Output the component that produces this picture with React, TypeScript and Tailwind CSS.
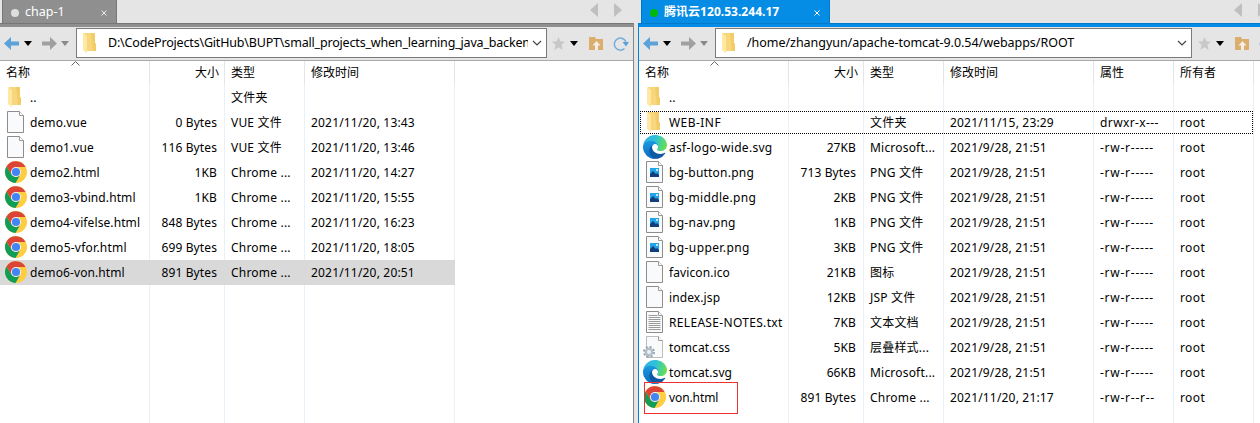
import { useId } from "react";
import type { ReactNode } from "react";

type IconKind = "folder" | "blank" | "chrome" | "edge" | "image" | "text" | "css";
type Entry = { icon: IconKind; name: string; size?: string; type?: string; time?: string; attr?: string; owner?: string; state?: "selected" | "focused" | "marked"; spacing?: string };

function Folder() {
  return (
    <svg width="16" height="22" viewBox="0 0 16 22" className="block">
      <path d="M2 1h11v10.500h1V19H4z" fill="#f7d67c" />
      <path d="M9 1h4v10.500h1V19h-3z" fill="#f1cc67" />
      <path d="M1 1l4 3v17.500L1 18z" fill="#ffe8a3" />
    </svg>
  );
}

function Page({ children }: { children?: ReactNode }) {
  return (
    <svg width="17" height="22" viewBox="0 0 17 22" className="block">
      <path d="M.5.5h12l4 4v17H.5z" fill="#f9fafb" stroke="#8d8d8d" />
      <path d="M12.500.5v4h4" fill="#fff" stroke="#9a9a9a" />
      {children}
    </svg>
  );
}

function Chrome() {
  return (
    <svg width="22" height="22" viewBox="0 0 48 48" className="block">
      <circle cx="24" cy="24" r="24" fill="#ffcd40" />
      <path d="M3.200 12L14.500 29.500A11 11 0 0 0 33.500 29.500L23 48A24 24 0 0 1 3.200 12z" fill="#0f9d58" />
      <path d="M3.200 12L14.500 29.500 24 13h20.800A24 24 0 0 0 3.200 12z" fill="#db4437" />
      <circle cx="24" cy="24" r="11" fill="#f1f1f1" />
      <circle cx="24" cy="24" r="8.900" fill="#4285f4" />
    </svg>
  );
}

function Edge() {
  const id = useId();
  return (
    <svg width="24" height="24" viewBox="0 0 256 256" className="block">
      <defs>
        <linearGradient id={id + "a"} x1="0" y1="0.300" x2="1" y2="0.500">
          <stop offset="0" stopColor="#35aee8" />
          <stop offset="0.500" stopColor="#2fc3d8" />
          <stop offset="1" stopColor="#66e04c" />
        </linearGradient>
        <linearGradient id={id + "b"} x1="0" y1="0" x2="0" y2="1">
          <stop offset="0" stopColor="#1b9de2" />
          <stop offset="1" stopColor="#0a6bc0" />
        </linearGradient>
      </defs>
      <path d="M231.100 190.500c-3.400 1.800-6.900 3.400-10.500 4.700a101.600 101.600 0 0 1-35.900 6.500c-47.300 0-88.500-32.500-88.500-74.300a31.500 31.500 0 0 1 16.400-27.300c-42.800 1.800-53.800 46.400-53.800 72.500 0 74 68.100 81.400 82.800 81.400 7.900 0 19.800-2.300 27-4.600l1.300-.4a128.300 128.300 0 0 0 66.600-52.800 4 4 0 0 0-5.400-5.700z" fill="#0c59a4" />
      <path d="M105.700 241.400a79.200 79.200 0 0 1-22.700-21.300 80.700 80.700 0 0 1 29.500-120c3.200-1.500 8.500-4.100 15.600-4a32.400 32.400 0 0 1 25.700 13 31.900 31.900 0 0 1 6.300 18.700c0-.2 24.500-79.600-80-79.600-43.900 0-80 41.700-80 78.200a130.200 130.200 0 0 0 12.100 56 128 128 0 0 0 156.400 67.100 75.500 75.500 0 0 1-62.800-8z" fill={`url(#${id}b)`} />
      <path d="M152.300 148.900c-.8 1-3.300 2.500-3.300 5.700 0 2.600 1.700 5.100 4.700 7.200 14.400 10 41.500 8.700 41.600 8.700a59.600 59.600 0 0 0 30.300-8.300 61.400 61.400 0 0 0 30.400-52.900c.3-22.400-8-37.300-11.300-43.900C223.500 23.900 177.700 0 128 0a128 128 0 0 0-128 126.200c.5-36.500 36.800-66 80-66 3.500 0 23.500.3 42 10 16.300 8.600 24.900 19 30.800 29.200 6.200 10.700 7.300 24.100 7.300 29.500s-2.700 13.300-7.800 19.900z" fill={`url(#${id}a)`} />
    </svg>
  );
}

function FileIcon({ kind }: { kind: IconKind }) {
  if (kind === "folder") return <Folder />;
  if (kind === "chrome") return <Chrome />;
  if (kind === "edge") return <Edge />;
  if (kind === "image")
    return (
      <Page>
        <path d="M4 7h9v9H4z" fill="#20a4ea" />
        <path d="M4 13l3-3 3 3 1-1 2 2v2H4z" fill="#123f7c" />
        <circle cx="11" cy="9" r="1" fill="#fff" />
      </Page>
    );
  if (kind === "text")
    return (
      <Page>
        <path d="M2.500 4.500h9M2.500 6.500h12M2.500 8.500h12M2.500 10.500h12M2.500 12.500h12M2.500 14.500h12M2.500 16.500h12M2.500 18.500h12" stroke="#9b9b9b" />
      </Page>
    );
  if (kind === "css")
    return (
      <svg width="20" height="22" viewBox="0 0 20 22" className="block">
        <path d="M3.500.5h12l4 4v17h-16z" fill="#f9fafb" stroke="#bdbdbd" />
        <path d="M15.500.5v4h4" fill="#fff" stroke="#9a9a9a" />
        <circle cx="6" cy="16" r="4.700" fill="none" stroke="#93a3b0" strokeWidth="2.500" strokeDasharray="2 1.690" />
        <circle cx="6" cy="16" r="3.200" fill="#eef2f5" stroke="#b3c0ca" strokeWidth="2.400" />
      </svg>
    );
  return <Page />;
}

const iconPlace: Record<IconKind, string> = {
  folder: "ml-[7px] mt-px",
  blank: "ml-[7px] mt-px",
  image: "ml-[7px] mt-px",
  text: "ml-[7px] mt-px",
  css: "ml-[4px] mt-px",
  chrome: "ml-[5px] mt-px",
  edge: "ml-[4px] mt-0",
};

function Caret({ color }: { color: string }) {
  return (
    <svg width="8" height="5" viewBox="0 0 8 5" className="block">
      <path d="M0 0h8L4 5z" fill={color} />
    </svg>
  );
}

function Arrow({ color, flip }: { color: string; flip?: boolean }) {
  return (
    <svg width="15" height="13" viewBox="0 0 15 13" className={flip ? "block rotate-180" : "block"}>
      <path d="M0 6.500L7 0v4.500h8v4H7V13z" fill={color} />
    </svg>
  );
}

function TabArrows({ className }: { className: string }) {
  return (
    <svg width="32" height="14" viewBox="0 0 32 14" className={`block shrink-0 ${className}`}>
      <path d="M8 0v14L0 7zM24 0v14l8-7z" fill="#bfbfbf" />
    </svg>
  );
}

function Toolbar({ path, boxClass, pathClass }: { path: string; boxClass: string; pathClass: string }) {
  return (
    <div className="flex h-[34px] shrink-0 items-start border-b border-[#aaa] bg-[#e5e5e5] pl-1 pt-px">
      <div className="flex h-[30px] shrink-0 items-center pr-[7px]">
        <Arrow color="#5ba2d9" />
        <div className="ml-[5px]"><Caret color="#000" /></div>
        <div className="ml-[10px]"><Arrow color="#a0a0a0" flip /></div>
        <div className="ml-[4px]"><Caret color="#8a8a8a" /></div>
      </div>
      <div className={`flex h-[30px] shrink-0 items-center border border-[#7a7a7a] bg-white ${boxClass}`}>
        <div className="ml-[5px] shrink-0"><Folder /></div>
        <div className={`ml-[10px] min-w-0 flex-1 overflow-hidden whitespace-nowrap pt-px text-[12.5px] ${pathClass}`}>{path}</div>
        <svg width="18" height="10" viewBox="0 0 18 10" className="block shrink-0">
          <path d="M5 3l4 4 4-4" fill="none" stroke="#444" strokeWidth="1.200" />
        </svg>
      </div>
      <div className="flex h-[30px] shrink-0 items-center pl-[5px]">
        <svg width="13" height="13" viewBox="0 0 14 14" className="block">
          <path d="M7 0l2 4.700 5 .4-3.800 3.300L11.400 14 7 11 2.600 14l1.200-5.600L0 5.100l5-.4z" fill="#c8c8c8" />
        </svg>
        <div className="ml-[5px]"><Caret color="#000" /></div>
        <svg width="15" height="13" viewBox="0 0 15 13" className="ml-[11px] block">
          <path d="M0 0h6l1 2h7v11H0z" fill="#dcae6e" />
          <path d="M7.500 4l4 4.500H9V13H6V8.500H3.500z" fill="#f3eee6" />
        </svg>
        <svg width="16" height="15" viewBox="0 0 16 15" className="ml-[9px] block">
          <path d="M11.500 12.500A6 6 0 1 1 13 6" fill="none" stroke="#73addc" strokeWidth="1.500" />
          <path d="M9.500 6H16l-3 4.500z" fill="#5ba2d9" />
        </svg>
      </div>
    </div>
  );
}

const cell = "h-full shrink-0 overflow-hidden whitespace-nowrap border-r";

function HeaderRow({ remote }: { remote?: boolean }) {
  return (
    <div className="flex h-6 shrink-0 leading-6">
      <div className={`${cell} relative w-[150px] border-[#e5e5e5] pl-[6px]`}>
        名称
        <svg width="9" height="5" viewBox="0 0 9 5" className="absolute left-[71px] top-0">
          <path d="M.5 4.500l4-4 4 4" fill="none" stroke="#666" />
        </svg>
      </div>
      <div className={`${cell} w-[75px] border-[#e5e5e5] pr-[5px] text-right`}>大小</div>
      <div className={`${cell} w-20 border-[#e5e5e5] pl-[6px]`}>类型</div>
      <div className={`${cell} w-[150px] border-[#e5e5e5] pl-[6px]`}>修改时间</div>
      {remote && <div className={`${cell} w-20 border-[#e5e5e5] pl-[6px]`}>属性</div>}
      {remote && <div className={`${cell} w-20 border-[#e5e5e5] pl-[6px]`}>所有者</div>}
    </div>
  );
}

function Row({ entry, remote }: { entry: Entry; remote?: boolean }) {
  const line = entry.state === "selected" ? "border-[#d9d9d9]" : "border-[#e8f0fa]";
  return (
    <div className={`relative flex h-[25px] shrink-0 leading-[25px] ${remote ? "w-[615px]" : "w-[455px]"} ${entry.state === "selected" ? "bg-[#d9d9d9]" : ""}`}>
      <div className={`${cell} flex w-[150px] ${line}`}>
        <div className="flex w-[30px] shrink-0 items-start">
          <div className={iconPlace[entry.icon]}><FileIcon kind={entry.icon} /></div>
        </div>
        <div className={entry.spacing ?? "tracking-[0.1px]"}>{entry.name}</div>
      </div>
      <div className={`${cell} w-[75px] pr-[7px] text-right tracking-[0.1px] ${line}`}>{entry.size}</div>
      <div className={`${cell} w-20 pl-[6px] tracking-[0.2px] ${line}`}>{entry.type}</div>
      <div className={`${cell} w-[150px] pl-[6px] tracking-[0.18px] ${line}`}>{entry.time}</div>
      {remote && <div className={`${cell} w-20 pl-[6px] ${entry.state === "focused" ? "tracking-[0.4px]" : "tracking-[0.75px]"} ${line}`}>{entry.attr}</div>}
      {remote && <div className={`${cell} w-20 pl-[6px] tracking-[0.4px] ${line}`}>{entry.owner}</div>}
      {entry.state === "focused" && <div className="absolute left-px top-px h-[23px] w-[613px] border border-dotted border-black" />}
      {entry.state === "marked" && <div className="absolute left-[5px] top-[-3px] h-8 w-[94px] border border-[#f03030]" />}
    </div>
  );
}

function Table({ entries, remote }: { entries: Entry[]; remote?: boolean }) {
  const line = "h-full shrink-0 border-r border-[#e8f0fa]";
  return (
    <div className="flex min-h-0 flex-1 flex-col bg-white">
      <HeaderRow remote={remote} />
      {entries.map((entry) => <Row key={entry.name} entry={entry} remote={remote} />)}
      <div className="flex min-h-0 flex-1">
        <div className={`${line} w-[150px]`} />
        <div className={`${line} w-[75px]`} />
        <div className={`${line} w-20`} />
        <div className={`${line} w-[150px]`} />
        {remote && <div className={`${line} w-20`} />}
        {remote && <div className={`${line} w-20`} />}
      </div>
    </div>
  );
}

const day = "2021/11/20, ";
const local: Entry[] = [
  { icon: "folder", name: "..", type: "文件夹" },
  { icon: "blank", name: "demo.vue", size: "0 Bytes", type: "VUE 文件", time: day + "13:43" },
  { icon: "blank", name: "demo1.vue", size: "116 Bytes", type: "VUE 文件", time: day + "13:46" },
  { icon: "chrome", name: "demo2.html", size: "1KB", type: "Chrome ...", time: day + "14:27" },
  { icon: "chrome", name: "demo3-vbind.html", size: "1KB", type: "Chrome ...", time: day + "15:55" },
  { icon: "chrome", name: "demo4-vifelse.html", size: "848 Bytes", type: "Chrome ...", time: day + "16:23" },
  { icon: "chrome", name: "demo5-vfor.html", size: "699 Bytes", type: "Chrome ...", time: day + "18:05", spacing: "tracking-[0.25px]" },
  { icon: "chrome", name: "demo6-von.html", size: "891 Bytes", type: "Chrome ...", time: day + "20:51", state: "selected" },
];

const release = { time: "2021/9/28, 21:51", attr: "-rw-r-----", owner: "root" };
const server: Entry[] = [
  { icon: "folder", name: ".." },
  { icon: "folder", name: "WEB-INF", type: "文件夹", time: "2021/11/15, 23:29", attr: "drwxr-x---", owner: "root", state: "focused", spacing: "tracking-[0.45px]" },
  { icon: "edge", name: "asf-logo-wide.svg", size: "27KB", type: "Microsoft...", ...release, spacing: "tracking-[0.3px]" },
  { icon: "image", name: "bg-button.png", size: "713 Bytes", type: "PNG 文件", ...release, spacing: "tracking-[0.22px]" },
  { icon: "image", name: "bg-middle.png", size: "2KB", type: "PNG 文件", ...release, spacing: "tracking-[0.32px]" },
  { icon: "image", name: "bg-nav.png", size: "1KB", type: "PNG 文件", ...release, spacing: "tracking-[0.3px]" },
  { icon: "image", name: "bg-upper.png", size: "3KB", type: "PNG 文件", ...release, spacing: "tracking-[0.4px]" },
  { icon: "blank", name: "favicon.ico", size: "21KB", type: "图标", ...release },
  { icon: "blank", name: "index.jsp", size: "12KB", type: "JSP 文件", ...release },
  { icon: "text", name: "RELEASE-NOTES.txt", size: "7KB", type: "文本文档", ...release, spacing: "tracking-[0.32px]" },
  { icon: "css", name: "tomcat.css", size: "5KB", type: "层叠样式...", ...release },
  { icon: "edge", name: "tomcat.svg", size: "66KB", type: "Microsoft...", ...release },
  { icon: "chrome", name: "von.html", size: "891 Bytes", type: "Chrome ...", time: "2021/11/20, 21:17", attr: "-rw-r--r--", owner: "root", state: "marked", spacing: "tracking-[-0.1px]" },
];

export default function App() {
  return (
    <div className="flex h-[423px] w-[1260px] overflow-hidden bg-[#e5e5e5] font-['Noto_Sans','Noto_Sans_CJK_SC',sans-serif] text-[12px] text-black">
      <div className="flex w-[634px] shrink-0 flex-col">
        <div className="flex h-[23px] shrink-0 justify-between pl-[2px]">
          <div className="flex w-[115px] items-center border-x border-[#777] bg-[#8f8f8f] text-[12.5px] text-white">
            <div className="ml-2 mt-[2px] size-2 rounded-full bg-[#dedede]" />
            <div className="ml-[6px] mt-[2px]">chap-1</div>
            <svg width="6" height="6" viewBox="0 0 6 6" className="ml-auto mr-[9px] mt-[2px]"><path d="M.5.5l5 5m0-5l-5 5" stroke="#eee" /></svg>
          </div>
          <TabArrows className="mr-[12px] mt-[3px]" />
        </div>
        <div className="flex min-h-0 flex-1 flex-col border-r border-[#858585]">
          <div className="h-1 shrink-0 border-t border-[#777] bg-[#8f8f8f]" />
          <Toolbar path="D:\CodeProjects\GitHub\BUPT\small_projects_when_learning_java_backen" boxClass="w-[471px]" pathClass="tracking-[-0.18px]" />
          <Table entries={local} />
        </div>
      </div>
      <div className="ml-1 flex w-[640px] shrink-0 flex-col">
        <div className="flex h-[23px] shrink-0 justify-between pl-[3px]">
          <div className="flex w-[189px] items-center border-x border-[#0078cc] bg-[#058ce5] text-[12px] font-bold text-white">
            <div className="ml-2 mt-[2px] size-2 rounded-full bg-[#00b80c]" />
            <div className="ml-[6px] tracking-[0.03px]">腾讯云120.53.244.17</div>
            <svg width="6" height="6" viewBox="0 0 6 6" className="ml-auto mr-[9px] mt-[2px]"><path d="M.5.5l5 5m0-5l-5 5" stroke="#fff" /></svg>
          </div>
          <TabArrows className="mr-[12px] mt-[3px]" />
        </div>
        <div className="flex min-h-0 flex-1 flex-col border-l border-[#0084d8]">
          <div className="h-1 shrink-0 border-t border-[#0078cc] bg-[#058ce5]" />
          <Toolbar path="/home/zhangyun/apache-tomcat-9.0.54/webapps/ROOT" boxClass="mr-px w-[477px]" pathClass="tracking-[-0.04px]" />
          <Table entries={server} remote />
        </div>
      </div>
    </div>
  );
}
